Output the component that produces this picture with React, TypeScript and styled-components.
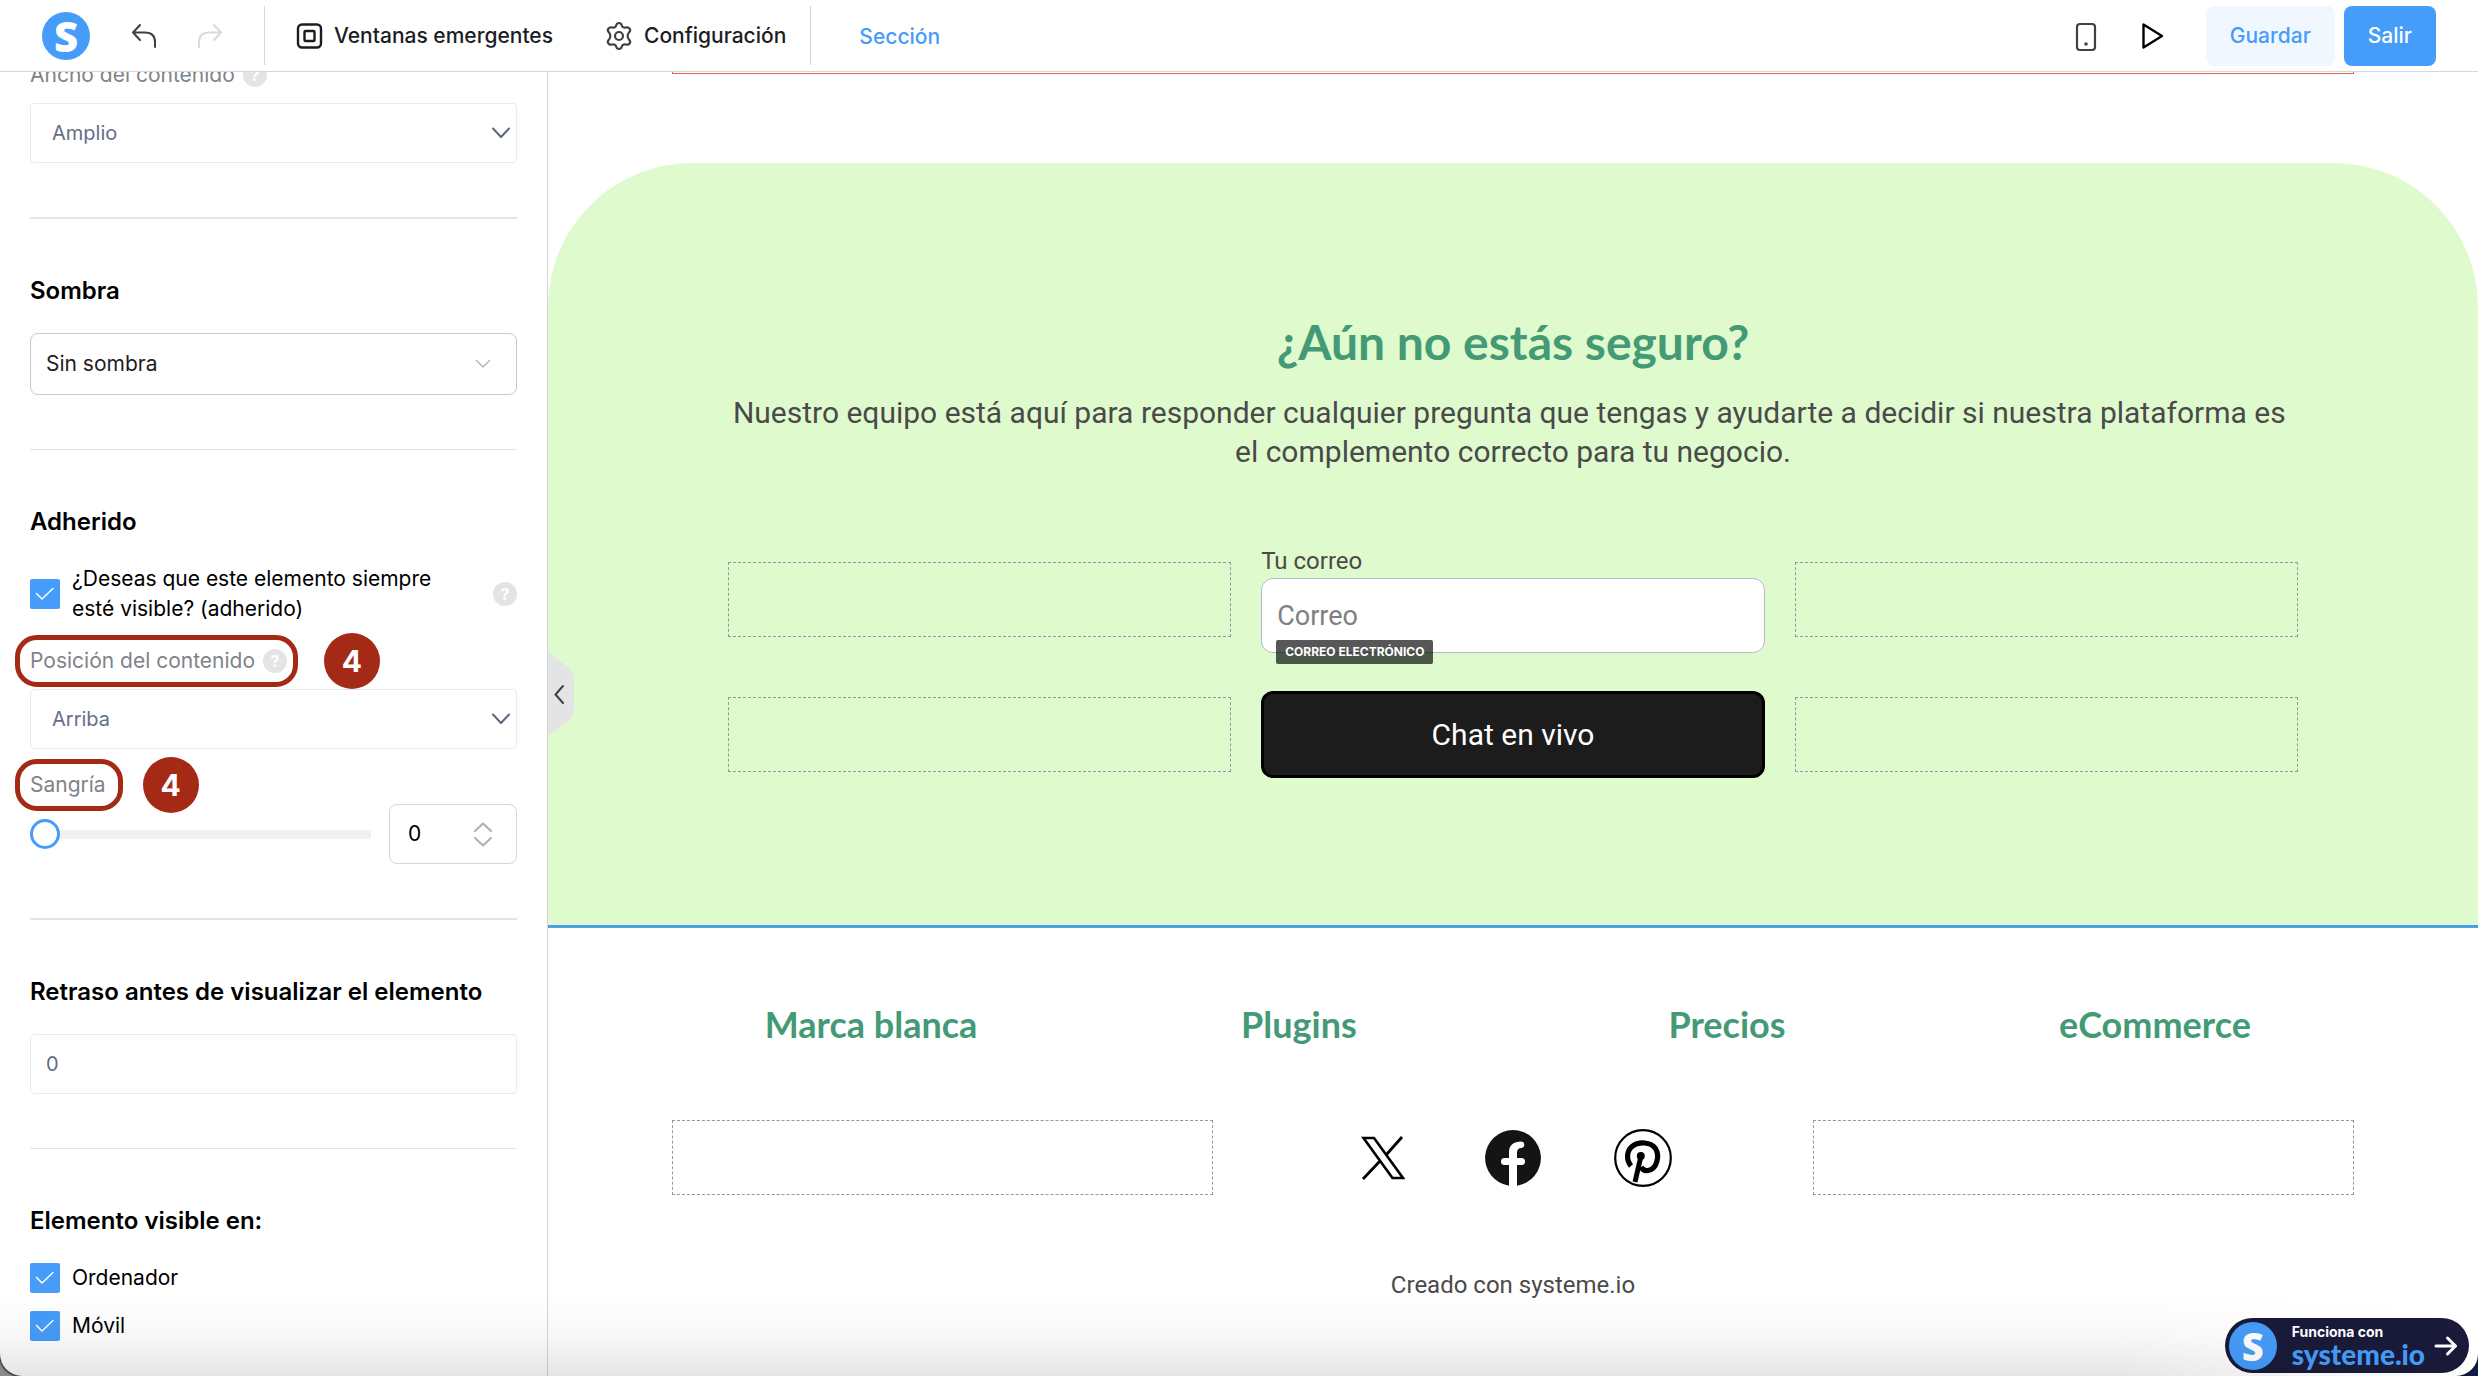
import React from "react";
import styled, { createGlobalStyle, css } from "styled-components";

const blue = "#459df9";
const red = "#a52a16";
const ui = `Inter, "Liberation Sans", sans-serif`;
const body = `Roboto, "Liberation Sans", sans-serif`;
const display = `Lato, "Liberation Sans", sans-serif`;
const logoFont = `"Open Sans", "Noto Sans", sans-serif`;

const GlobalStyle = createGlobalStyle`
  *, *::before, *::after { box-sizing: border-box; }
  body {
    margin: 0;
    background: linear-gradient(90deg, #8c8c8c 0 50%, #0c1d4d 50%);
    font-family: ${ui};
    color: #000;
  }
  button, input, select { font: inherit; color: inherit; margin: 0; }
  button { border: 0; background: none; padding: 0; cursor: pointer; }
  h2, h3, p { margin: 0; }
`;

const Shell = styled.div`
  position: relative;
  height: 100vh;
  display: flex;
  flex-direction: column;
  overflow: hidden;
  background: #fff;
  border-radius: 0 0 22px 22px;
  box-shadow: 0 0 2px 1px #111;
`;

const BottomShade = styled.div`
  position: absolute;
  inset: auto 0 0 0;
  height: 80px;
  pointer-events: none;
  background: linear-gradient(rgba(0, 0, 0, 0), rgba(0, 0, 0, 0.03) 50%, rgba(0, 0, 0, 0.1));
  mask-image: linear-gradient(90deg, #000 85%, transparent);
`;

/* Top bar */

const TopBar = styled.header`
  flex: none;
  height: 72px;
  display: flex;
  align-items: center;
  padding: 0 42px;
  border-bottom: 1px solid #d5d8d8;
  font-size: 21px;
  font-weight: 500;
  line-height: 28px;
`;

const LogoDisc = styled.span<{ $size: number; $letter: number }>`
  flex: none;
  width: ${(p) => p.$size}px;
  height: ${(p) => p.$size}px;
  display: grid;
  place-items: center;
  border-radius: 50%;
  background: ${blue};
  color: #fff;
  font-family: ${logoFont};
  font-size: ${(p) => p.$letter}px;
  font-weight: 800;
  line-height: 1;
`;

const History = styled.div`
  display: flex;
  gap: 38px;
  padding: 0 40px;
`;

const IconButton = styled.button<{ $muted?: boolean }>`
  display: grid;
  place-items: center;
  width: 28px;
  height: 28px;
  color: ${(p) => (p.$muted ? "#d9dadb" : "#3f4144")};
`;

const Nav = styled.nav`
  display: flex;
  align-items: center;
  gap: 52px;
  height: 59px;
  padding: 0 24px 0 31px;
  border: solid #d5d8d8;
  border-width: 0 1px;
`;

const NavItem = styled.button`
  display: flex;
  align-items: center;
  gap: 11px;
  color: #1c1d1f;
`;

const Crumb = styled.a`
  padding: 2px 0 0 48px;
  color: ${blue};
  text-decoration: none;
`;

const Actions = styled.div`
  margin-left: auto;
  display: flex;
  align-items: center;
  gap: 39px;
`;

const ButtonPair = styled.div`
  display: flex;
  gap: 9px;
`;

const ActionButton = styled.button<{ $primary?: boolean }>`
  height: 60px;
  padding: 0 24px;
  border-radius: 8px;
  background: ${(p) => (p.$primary ? blue : "#f0f7fe")};
  color: ${(p) => (p.$primary ? "#fff" : blue)};
`;

/* Workspace */

const Workspace = styled.div`
  flex: 1;
  min-height: 0;
  display: flex;
`;

const Sidebar = styled.aside`
  flex: none;
  width: 548px;
  overflow: hidden;
  border-right: 1px solid #d4d4d4;
  padding: 0 30px;
  font-size: 21px;
  line-height: 30px;
`;

const Scrolled = styled.div`
  margin-top: -65px;
`;

const Group = styled.section<{ $line?: number }>`
  padding: 56px 0 54px;
  border-bottom: ${(p) => p.$line ?? 0}px solid #e4e4e4;
`;

const titleText = css`
  margin-bottom: 26px;
  font-size: 24px;
  font-weight: 600;
  line-height: 32px;
`;

const GroupTitle = styled.h3`
  ${titleText}
`;

const TitleLabel = styled.label`
  display: block;
  ${titleText}
`;

const FieldHead = styled.div<{ $top?: number; $bottom: number; $height?: number }>`
  display: flex;
  align-items: center;
  height: ${(p) => p.$height ?? 32}px;
  margin: ${(p) => p.$top ?? 0}px 0 ${(p) => p.$bottom}px;
  color: #808389;
`;

const FieldName = styled.span`
  position: relative;
  display: flex;
  align-items: center;
  gap: 8px;
  height: 32px;
`;

const HelpDot = styled.span`
  flex: none;
  width: 24px;
  height: 24px;
  display: grid;
  place-items: center;
  border-radius: 50%;
  background: #e3e4e6;
  color: #fff;
  font-size: 16px;
  font-weight: 700;
  line-height: 24px;
`;

const Highlight = styled.span<{ $reach: number }>`
  position: absolute;
  inset: -10px -${(p) => p.$reach}px -10px -15px;
  border: 5px solid ${red};
  border-radius: 22px;
  pointer-events: none;
`;

const StepBadge = styled.span`
  position: absolute;
  left: calc(100% + 37px);
  top: -12px;
  width: 56px;
  height: 56px;
  display: grid;
  place-items: center;
  border-radius: 50%;
  background: ${red};
  color: #fff;
  font-size: 30px;
  font-weight: 700;
  line-height: 30px;
`;

const SelectBox = styled.div<{ $strong?: boolean }>`
  display: grid;
  align-items: center;
  > * { grid-area: 1 / 1; }
  > svg {
    justify-self: end;
    margin-right: ${(p) => (p.$strong ? 26 : 6)}px;
    pointer-events: none;
    color: ${(p) => (p.$strong ? "#b4b6b9" : "#5d6780")};
  }
`;

const Select = styled.select<{ $strong?: boolean }>`
  appearance: none;
  width: 100%;
  height: ${(p) => (p.$strong ? 62 : 60)}px;
  padding: 0 ${(p) => (p.$strong ? 15 : 21)}px;
  border: 1px solid ${(p) => (p.$strong ? "#c9cacc" : "#ebebeb")};
  border-radius: ${(p) => (p.$strong ? 8 : 4)}px;
  background: #fff;
  color: ${(p) => (p.$strong ? "#1c1d1f" : "#656e87")};
  font-size: ${(p) => (p.$strong ? 21 : 20)}px;
`;

const TextInput = styled.input`
  display: block;
  width: 100%;
  height: 60px;
  padding: 0 15px;
  border: 1px solid #ebebeb;
  border-radius: 4px;
  color: #656e87;
  font-size: 20px;
`;

const CheckRow = styled.label`
  display: flex;
  align-items: center;
  gap: 12px;
  & + & { margin-top: 18px; }
`;

const CheckText = styled.span`
  flex: 1;
  padding-right: 40px;
`;

const CheckMark = styled.span`
  flex: none;
  display: grid;
  place-items: center;
  width: 30px;
  height: 30px;
  color: #fff;
  > * { grid-area: 1 / 1; }
  > svg { pointer-events: none; }
`;

const Checkbox = styled.input`
  appearance: none;
  width: 30px;
  height: 30px;
  border-radius: 2px;
  background: ${blue};
`;

const SliderRow = styled.div`
  display: flex;
  align-items: center;
  gap: 18px;
`;

const Slider = styled.input`
  appearance: none;
  flex: 1;
  min-width: 0;
  height: 30px;
  background: linear-gradient(#f1f1f1, #f1f1f1) center / 100% 9px no-repeat;
  border-radius: 5px;
  &::-webkit-slider-thumb {
    appearance: none;
    width: 30px;
    height: 30px;
    border: 3px solid ${blue};
    border-radius: 50%;
    background: #fff;
  }
`;

const NumberBox = styled.div`
  flex: none;
  width: 128px;
  height: 60px;
  display: flex;
  align-items: center;
  padding: 0 23px 0 18px;
  border: 1px solid #d5d6d8;
  border-radius: 8px;
`;

const NumberInput = styled.input`
  appearance: textfield;
  flex: 1;
  min-width: 0;
  padding: 0;
  border: 0;
  background: none;
  &::-webkit-inner-spin-button { appearance: none; }
`;

const Steppers = styled.div`
  display: grid;
  gap: 5px;
  color: #adafb3;
`;

const Stepper = styled.button`
  display: grid;
  place-items: center;
  height: 10px;
`;

/* Canvas */

const Canvas = styled.main`
  position: relative;
  flex: 1;
  min-width: 0;
  overflow: hidden;
  font-family: ${body};
  color: #4a4a4a;
`;

const Container = styled.div<{ $max: number }>`
  width: 100%;
  max-width: ${(p) => p.$max}px;
  margin: 0 auto;
`;

const PreviousSection = styled(Container)`
  height: 2px;
  border: solid #e0604f;
  border-width: 0 1px 1px;
  margin-bottom: 89px;
`;

const CollapseTab = styled.button`
  position: absolute;
  left: 0;
  top: 580px;
  width: 26px;
  height: 84px;
  color: #3f4144;
  > svg { display: block; }
`;

const Hero = styled.section`
  padding: 150px 0 147px;
  border-radius: 144px 144px 0 0;
  background: #dffbce;
  text-align: center;
`;

const HeroTitle = styled.h2`
  margin-bottom: 22px;
  color: #449a75;
  font-family: ${display};
  font-size: 48px;
  font-weight: 700;
  line-height: 58px;
`;

const HeroText = styled.p`
  margin-bottom: 74px;
  font-size: 30px;
  line-height: 39px;
`;

const ThreeColumns = styled.div`
  display: grid;
  grid-template-columns: repeat(3, 1fr);
  align-items: center;
  gap: 38px 30px;
`;

const EmptySlot = styled.div`
  height: 75px;
  border: 1px dashed #8f99a3;
`;

const EmailField = styled.div`
  position: relative;
  text-align: left;
`;

const EmailLabel = styled.label`
  display: block;
  font-size: 24px;
  line-height: 33px;
`;

const EmailInput = styled.input`
  display: block;
  width: 100%;
  height: 75px;
  padding: 0 15px;
  border: 1px solid #b3b8cf;
  border-radius: 12px;
  background: #fff;
  font-size: 27px;
  &::placeholder { color: #808080; }
`;

const FieldTag = styled.span`
  position: absolute;
  left: 15px;
  bottom: -11px;
  padding: 0 9px;
  border-radius: 2px;
  background: rgba(0, 0, 0, 0.66);
  color: #fff;
  font-family: ${ui};
  font-size: 12px;
  font-weight: 700;
  line-height: 24px;
`;

const ChatButton = styled.button`
  height: 87px;
  border: 3px solid #000;
  border-radius: 12px;
  background: #1c1c1c;
  color: #fff;
  font-size: 30px;
`;

const SelectionLine = styled.div`
  height: 3px;
  background: linear-gradient(${blue} 2px, #58a8c0 2px);
`;

const Footer = styled.footer`
  padding-top: 74px;
  text-align: center;
`;

const FooterLinks = styled.div`
  display: grid;
  grid-template-columns: repeat(4, 1fr);
  gap: 30px;
  margin-bottom: 74px;
`;

const FooterHeading = styled.h3`
  color: #449a75;
  font-family: ${display};
  font-size: 36px;
  font-weight: 700;
  line-height: 44px;
`;

const Social = styled.div`
  display: flex;
  justify-content: center;
  gap: 72px;
`;

const SocialLink = styled.a`
  display: grid;
  place-items: center;
  width: 58px;
  height: 58px;
  color: #000;
`;

const Credit = styled.p`
  margin-top: 74px;
  font-size: 24px;
  line-height: 32px;
`;

const PoweredBy = styled.a`
  position: absolute;
  right: 9px;
  bottom: 3px;
  height: 55px;
  display: flex;
  align-items: center;
  gap: 15px;
  padding: 0 11px 0 4px;
  border-radius: 28px;
  background: #1a1b3a;
  color: #fff;
  font-family: ${ui};
  text-decoration: none;
`;

const PoweredText = styled.span`
  display: grid;
  font-size: 14px;
  font-weight: 700;
  line-height: 16px;
`;

const Brand = styled.span`
  color: ${blue};
  font-family: ${display};
  font-size: 28px;
  font-weight: 900;
  line-height: 28px;
`;

const Powered = styled.span`
  display: flex;
  align-items: center;
  gap: 9px;
`;

/* Drawings */

type StrokeProps = { w: number; h: number; d: string; sw?: number };

const Stroke = ({ w, h, d, sw = 2 }: StrokeProps) => (
  <svg width={w} height={h} viewBox={`0 0 ${w} ${h}`} fill="none" stroke="currentColor"
    strokeWidth={sw} strokeLinecap="round" strokeLinejoin="round" aria-hidden="true">
    <path d={d} />
  </svg>
);

const Chevron = () => <Stroke w={20} h={12} d="M2 1.5 10 10 18 1.5" />;
const SmallChevron = () => <Stroke w={16} h={10} d="M1.5 1.5 8 8 14.5 1.5" sw={1.5} />;
const Tick = () => <Stroke w={20} h={14} d="M1.5 6.5 7 12 18 1.5" sw={1.5} />;

const PopupIcon = () => (
  <svg width="27" height="28" viewBox="0 0 27 28" fill="none" stroke="#1c1d1f" strokeWidth="2.4" aria-hidden="true">
    <rect x="2" y="2.5" width="23" height="23" rx="4" />
    <rect x="8.5" y="9" width="10" height="10" rx="1" />
  </svg>
);

const GearIcon = () => (
  <svg width="28" height="30" viewBox="0 0 28 30" fill="none" stroke="#3f4144" strokeWidth="2.2" strokeLinejoin="round" aria-hidden="true">
    <path d="M11.2 4.400C12 1.200 16 1.200 16.800 4.400 17.200 6.200 18.800 7 20.700 6.500 24.300 5.500 26.600 8.900 24 11.500 22.200 13.300 22.200 16.700 24 18.500 26.600 21.100 24.300 24.500 20.700 23.500 18.800 23 17.200 23.800 16.800 25.600 16 28.800 12 28.800 11.200 25.600 10.800 23.800 9.200 23 7.300 23.500 3.700 24.500 1.400 21.100 4 18.500 5.800 16.700 5.800 13.300 4 11.500 1.400 8.900 3.700 5.500 7.300 6.500 9.200 7 10.800 6.200 11.200 4.400Z" />
    <circle cx="14" cy="15" r="4" />
  </svg>
);

const PhoneIcon = () => (
  <svg width="22" height="30" viewBox="0 0 22 30" fill="none" aria-hidden="true">
    <rect x="2" y="2" width="18" height="26" rx="3" stroke="#3f4144" strokeWidth="2.2" />
    <circle cx="11" cy="22" r="1.8" fill="#3f4144" />
  </svg>
);

const TabShape = () => (
  <svg width="26" height="84" viewBox="0 0 26 84" fill="none" aria-hidden="true">
    <path d="M0 0 20 15Q26 20 26 27V57Q26 64 20 69L0 84Z" fill="#e3e4e6" />
    <path d="M15 34 7.500 42.500 15 51" stroke="currentColor" strokeWidth="2" strokeLinecap="round" strokeLinejoin="round" />
  </svg>
);

const XLogo = () => (
  <svg width="44" height="44" viewBox="0 0 44 44" fill="none" stroke="#000" aria-hidden="true">
    <path d="M2.500 2H13L42 42H31.500Z" strokeWidth="2.600" />
    <path d="M41 1 25.500 18.500M18.500 25.500 2 43" strokeWidth="2.800" />
  </svg>
);

const FacebookLogo = () => (
  <svg width="56" height="56" viewBox="0 0 56 56" aria-hidden="true">
    <path fill="#141414" d="M28 0a28 28 0 0 1 4 55.700V35h4.500a3.500 3.500 0 0 0 0-7H32v-5.500c0-3 1.500-4.500 4.500-4.500a3.300 3.300 0 0 0 0-6.500C28.500 11.500 24 15.500 24 22v6h-4.500a3.500 3.500 0 0 0 0 7H24v20.700A28 28 0 0 1 28 0Z" />
  </svg>
);

const PinterestLogo = () => (
  <svg width="58" height="58" viewBox="0 0 58 58" fill="none" stroke="#000" aria-hidden="true">
    <circle cx="29" cy="29" r="27.800" strokeWidth="2.200" />
    <path d="M17 37C12 31 12.500 22 18 17.500 25 12 37 13 41.500 19.500 46 27 43 40 34 41.500 30.500 42 28 40 27 38" strokeWidth="5.200" />
    <path d="M27 27 21 53" strokeWidth="5" />
    <circle cx="26.800" cy="27" r="4" fill="#000" stroke="none" />
  </svg>
);

const Help = () => <HelpDot>?</HelpDot>;

const CheckBoxField = ({ id }: { id: string }) => (
  <CheckMark>
    <Checkbox id={id} type="checkbox" defaultChecked />
    <Tick />
  </CheckMark>
);

const footerLinks = ["Marca blanca", "Plugins", "Precios", "eCommerce"];

export default function App() {
  return (
    <>
      <GlobalStyle />
      <Shell>
        <TopBar>
          <LogoDisc $size={48} $letter={42}>S</LogoDisc>
          <History>
            <IconButton aria-label="Deshacer">
              <Stroke w={28} h={28} d="M10 3 3 10.500 10 18M3 10.500H15Q25 10.500 25 20V25" />
            </IconButton>
            <IconButton aria-label="Rehacer" $muted>
              <Stroke w={28} h={28} d="M18 3 25 10.500 18 18M25 10.500H13Q3 10.500 3 20V25" />
            </IconButton>
          </History>
          <Nav>
            <NavItem><PopupIcon />Ventanas emergentes</NavItem>
            <NavItem><GearIcon />Configuración</NavItem>
          </Nav>
          <Crumb href="#seccion">Sección</Crumb>
          <Actions>
            <IconButton aria-label="Vista móvil"><PhoneIcon /></IconButton>
            <IconButton aria-label="Vista previa">
              <svg width="24" height="28" viewBox="0 0 24 28" fill="none" stroke="#000" strokeWidth="2.4" strokeLinejoin="round" aria-hidden="true">
                <path d="M2.500 2.500V25.500L21 14Z" />
              </svg>
            </IconButton>
            <ButtonPair>
              <ActionButton>Guardar</ActionButton>
              <ActionButton $primary>Salir</ActionButton>
            </ButtonPair>
          </Actions>
        </TopBar>

        <Workspace>
          <Sidebar>
            <Scrolled>
              <Group $line={2}>
                <FieldHead $bottom={16} $height={24}>
                  <FieldName>
                    <label htmlFor="ancho">Ancho del contenido</label>
                    <Help />
                  </FieldName>
                </FieldHead>
                <SelectBox>
                  <Select id="ancho"><option>Amplio</option></Select>
                  <Chevron />
                </SelectBox>
              </Group>

              <Group $line={1}>
                <TitleLabel htmlFor="sombra">Sombra</TitleLabel>
                <SelectBox $strong>
                  <Select id="sombra" $strong><option>Sin sombra</option></Select>
                  <SmallChevron />
                </SelectBox>
              </Group>

              <Group $line={2}>
                <GroupTitle>Adherido</GroupTitle>
                <CheckRow htmlFor="adherido">
                  <CheckBoxField id="adherido" />
                  <CheckText>¿Deseas que este elemento siempre esté visible? (adherido)</CheckText>
                  <Help />
                </CheckRow>
                <FieldHead $top={21} $bottom={12}>
                  <FieldName>
                    <label htmlFor="posicion">Posición del contenido</label>
                    <Help />
                    <Highlight $reach={11} />
                    <StepBadge>4</StepBadge>
                  </FieldName>
                </FieldHead>
                <SelectBox>
                  <Select id="posicion"><option>Arriba</option></Select>
                  <Chevron />
                </SelectBox>
                <FieldHead $top={20} $bottom={3}>
                  <FieldName>
                    <label htmlFor="sangria">Sangría</label>
                    <Highlight $reach={17} />
                    <StepBadge>4</StepBadge>
                  </FieldName>
                </FieldHead>
                <SliderRow>
                  <Slider id="sangria" type="range" min={0} max={100} defaultValue={0} />
                  <NumberBox>
                    <NumberInput type="number" aria-label="Valor de sangría" defaultValue={0} />
                    <Steppers>
                      <Stepper aria-label="Aumentar"><Stroke w={20} h={10} d="M2 9 10 1.500 18 9" /></Stepper>
                      <Stepper aria-label="Reducir"><Stroke w={20} h={10} d="M2 1 10 8.500 18 1" /></Stepper>
                    </Steppers>
                  </NumberBox>
                </SliderRow>
              </Group>

              <Group $line={1}>
                <TitleLabel htmlFor="retraso">Retraso antes de visualizar el elemento</TitleLabel>
                <TextInput id="retraso" type="text" defaultValue="0" />
              </Group>

              <Group>
                <GroupTitle>Elemento visible en:</GroupTitle>
                <CheckRow htmlFor="ordenador">
                  <CheckBoxField id="ordenador" />
                  <CheckText>Ordenador</CheckText>
                </CheckRow>
                <CheckRow htmlFor="movil">
                  <CheckBoxField id="movil" />
                  <CheckText>Móvil</CheckText>
                </CheckRow>
              </Group>
            </Scrolled>
          </Sidebar>

          <Canvas>
            <PreviousSection $max={1682} />
            <Hero>
              <Container $max={1571}>
                <HeroTitle>¿Aún no estás seguro?</HeroTitle>
                <HeroText>
                  Nuestro equipo está aquí para responder cualquier pregunta que tengas y ayudarte a decidir si nuestra plataforma es&nbsp; el complemento correcto para tu negocio.
                </HeroText>
                <ThreeColumns>
                  <EmptySlot />
                  <EmailField>
                    <EmailLabel htmlFor="correo">Tu correo</EmailLabel>
                    <EmailInput id="correo" type="email" placeholder="Correo" />
                    <FieldTag>CORREO ELECTRÓNICO</FieldTag>
                  </EmailField>
                  <EmptySlot />
                  <EmptySlot />
                  <ChatButton>Chat en vivo</ChatButton>
                  <EmptySlot />
                </ThreeColumns>
              </Container>
            </Hero>
            <SelectionLine />
            <Footer>
              <Container $max={1682}>
                <FooterLinks>
                  {footerLinks.map((name) => (
                    <FooterHeading key={name}>{name}</FooterHeading>
                  ))}
                </FooterLinks>
                <ThreeColumns>
                  <EmptySlot />
                  <Social>
                    <SocialLink href="#x" aria-label="X"><XLogo /></SocialLink>
                    <SocialLink href="#facebook" aria-label="Facebook"><FacebookLogo /></SocialLink>
                    <SocialLink href="#pinterest" aria-label="Pinterest"><PinterestLogo /></SocialLink>
                  </Social>
                  <EmptySlot />
                </ThreeColumns>
                <Credit>Creado con systeme.io</Credit>
              </Container>
            </Footer>
            <CollapseTab aria-label="Contraer panel"><TabShape /></CollapseTab>
            <PoweredBy href="#systeme">
              <LogoDisc $size={48} $letter={38}>S</LogoDisc>
              <Powered>
                <PoweredText>
                  Funciona con
                  <Brand>systeme.io</Brand>
                </PoweredText>
                <Stroke w={24} h={20} d="M2 10H21.500M13.500 2 21.500 10 13.500 18" sw={3} />
              </Powered>
            </PoweredBy>
          </Canvas>
        </Workspace>
        <BottomShade />
      </Shell>
    </>
  );
}
